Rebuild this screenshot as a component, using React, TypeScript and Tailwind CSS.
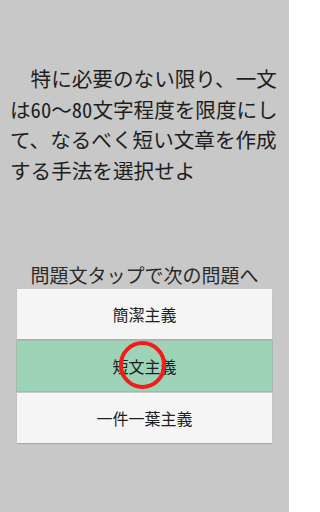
import React from "react";

const jp = { fontFamily: '"Noto Sans CJK JP", "Noto Sans", sans-serif' };

export default function App() {
  return (
    <div
      className="relative flex h-[512px] w-[289px] flex-col bg-[#c8c8c8] text-[#1e1e1e]"
      style={jp}
    >
      <p className="px-[10px] pt-[63px] text-[20.6px] leading-[30.7px] whitespace-nowrap">
        {"\u3000特に必要のない限り、一文"}
        <br />
        は<span className="[font-feature-settings:'hwid']">60</span>〜
        <span className="[font-feature-settings:'hwid']">80</span>文字程度を限度にし
        <br />
        て、なるべく短い文章を作成
        <br />
        する手法を選択せよ
      </p>
      <div className="mt-[77px] h-[24px] text-center text-[19px] leading-[24px] text-[#2a2a2a]">
        問題文タップで次の問題へ
      </div>
      <div className="mt-[2px] flex flex-col px-[17px]">
        <button className="h-[50px] bg-[#f5f5f5] text-[16px] text-[#1e1e1e] shadow-[0_1px_1px_rgba(0,0,0,0.12)]">
          簡潔主義
        </button>
        <button className="relative -mx-px mt-px h-[52px] border border-[#a6b9ae] bg-[#9dd3b6] text-[16px] text-[#1e1e1e]">
          短文主義
          <span className="absolute left-[102px] top-[0px] h-[48px] w-[47px] rounded-full border-[4px] border-[#f31c1c]" />
        </button>
        <button className="mt-px h-[50px] bg-[#f5f5f5] text-[16px] text-[#1e1e1e] shadow-[0_1px_1px_rgba(0,0,0,0.15)]">
          一件一葉主義
        </button>
      </div>
    </div>
  );
}
